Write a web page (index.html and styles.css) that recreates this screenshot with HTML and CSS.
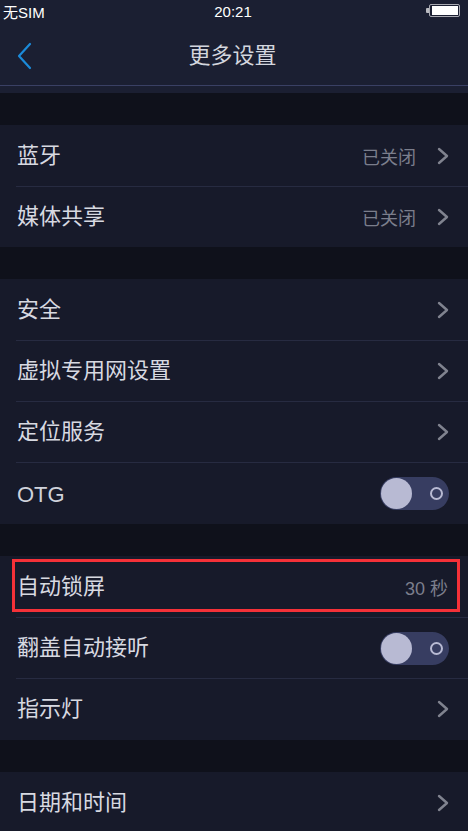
FILE: index.html
```html
<!DOCTYPE html>
<html lang="zh-CN">
<head>
<meta charset="utf-8">
<title>更多设置</title>
<link rel="stylesheet" href="styles.css">
</head>
<body>
<div class="page">
  <header class="top">
    <div class="status">
      <span class="carrier">无SIM</span>
      <span class="clock">20:21</span>
      <span class="battery"><span class="nub"></span><span class="cell"><span class="fill"></span></span></span>
    </div>
    <div class="nav">
      <svg class="back" width="16" height="28" viewBox="0 0 16 28"><path d="M14 2 L3 14 L14 26" fill="none" stroke="#1b8ad9" stroke-width="2.2" stroke-linecap="round" stroke-linejoin="round"/></svg>
      <h1 class="title">更多设置</h1>
    </div>
    <div class="navpad"></div>
  </header>

  <div class="gap"></div>
  <section class="group">
    <div class="row"><span class="label">蓝牙</span><span class="value">已关闭</span><svg class="chev" width="12" height="18" viewBox="0 0 12 18"><path d="M2 2 L10 9 L2 16" fill="none" stroke="#80838f" stroke-width="2.4" stroke-linecap="round" stroke-linejoin="round"/></svg></div>
    <div class="row"><span class="label">媒体共享</span><span class="value">已关闭</span><svg class="chev" width="12" height="18" viewBox="0 0 12 18"><path d="M2 2 L10 9 L2 16" fill="none" stroke="#80838f" stroke-width="2.4" stroke-linecap="round" stroke-linejoin="round"/></svg></div>
  </section>

  <div class="gap"></div>
  <section class="group">
    <div class="row"><span class="label">安全</span><svg class="chev" width="12" height="18" viewBox="0 0 12 18"><path d="M2 2 L10 9 L2 16" fill="none" stroke="#80838f" stroke-width="2.4" stroke-linecap="round" stroke-linejoin="round"/></svg></div>
    <div class="row"><span class="label">虚拟专用网设置</span><svg class="chev" width="12" height="18" viewBox="0 0 12 18"><path d="M2 2 L10 9 L2 16" fill="none" stroke="#80838f" stroke-width="2.4" stroke-linecap="round" stroke-linejoin="round"/></svg></div>
    <div class="row"><span class="label">定位服务</span><svg class="chev" width="12" height="18" viewBox="0 0 12 18"><path d="M2 2 L10 9 L2 16" fill="none" stroke="#80838f" stroke-width="2.4" stroke-linecap="round" stroke-linejoin="round"/></svg></div>
    <div class="row tall"><span class="label latin">OTG</span><span class="toggle"><span class="knob"></span><span class="ring"></span></span></div>
  </section>

  <div class="gap"></div>
  <section class="group">
    <div class="row marked"><span class="label">自动锁屏</span><span class="value last">30 秒</span><span class="highlight"></span></div>
    <div class="row"><span class="label">翻盖自动接听</span><span class="toggle"><span class="knob"></span><span class="ring"></span></span></div>
    <div class="row tall"><span class="label">指示灯</span><svg class="chev" width="12" height="18" viewBox="0 0 12 18"><path d="M2 2 L10 9 L2 16" fill="none" stroke="#80838f" stroke-width="2.4" stroke-linecap="round" stroke-linejoin="round"/></svg></div>
  </section>

  <div class="gap"></div>
  <section class="group">
    <div class="row"><span class="label">日期和时间</span><svg class="chev" width="12" height="18" viewBox="0 0 12 18"><path d="M2 2 L10 9 L2 16" fill="none" stroke="#80838f" stroke-width="2.4" stroke-linecap="round" stroke-linejoin="round"/></svg></div>
  </section>
</div>
</body>
</html>
```

FILE: styles.css
```css
html, body {
  margin: 0;
  padding: 0;
  background: #171a2a;
}
body {
  font-family: "Liberation Sans", "Noto Sans CJK SC", sans-serif;
  width: 468px;
  height: 831px;
  overflow: hidden;
}
.page {
  display: flex;
  flex-direction: column;
}
.top {
  background: #1b1f32;
  display: flex;
  flex-direction: column;
}
.status {
  height: 22px;
  display: flex;
  align-items: center;
  justify-content: space-between;
  padding: 0 8px 0 3px;
  position: relative;
  color: #ffffff;
  font-size: 15px;
}
.clock {
  position: absolute;
  left: 0;
  right: 0;
  text-align: center;
  margin-left: -2px;
}
.battery {
  display: flex;
  align-items: center;
  margin-top: -2px;
}
.nub {
  width: 3px;
  height: 5px;
  background: #b9bac0;
  border-radius: 1px 0 0 1px;
}
.cell {
  width: 31px;
  height: 13px;
  box-sizing: border-box;
  border: 1px solid #a9aab2;
  border-radius: 2px;
  padding: 1px 1px 1px 2px;
  display: flex;
}
.fill {
  flex: 1;
  background: #ffffff;
}
.nav {
  height: 62px;
  padding-bottom: 1px;
  display: flex;
  align-items: center;
  justify-content: center;
  position: relative;
  border-bottom: 1px solid #3a4064;
}
.back {
  position: absolute;
  left: 16px;
  top: 20px;
}
.title {
  margin: 0;
  font-family: "Noto Sans CJK SC", sans-serif;
  font-weight: 400;
  font-size: 22px;
  color: #d3d6de;
  margin-left: -3px;
}
.navpad {
  height: 7px;
}
.gap {
  height: 32px;
  background: #0f111b;
}
.group {
  display: flex;
  flex-direction: column;
}
.row {
  height: 61px;
  box-sizing: border-box;
  display: flex;
  align-items: center;
  padding: 0 19px 0 17px;
  position: relative;
}
.row.tall {
  height: 62px;
}
.row + .row::before {
  content: "";
  position: absolute;
  left: 16px;
  right: 0;
  top: 0;
  height: 1px;
  background: #272b41;
}
.label {
  flex: 1;
  font-size: 22px;
  color: #d7d9e1;
  line-height: 1;
}
.label.latin {
  color: #cfd2db;
  padding-top: 3px;
}
.value {
  font-size: 18px;
  color: #7b7e8c;
  margin-right: 21px;
  font-family: "Noto Sans CJK SC", sans-serif;
}
.value.last {
  margin-right: 1px;
  font-family: "Liberation Sans", "Noto Sans CJK SC", sans-serif;
}
.toggle {
  width: 69px;
  height: 33px;
  border-radius: 17px;
  background: #373d61;
  display: flex;
  align-items: center;
  justify-content: space-between;
  padding: 0 6px 0 1px;
  box-sizing: border-box;
  margin-top: 1px;
}
.knob {
  width: 31px;
  height: 31px;
  border-radius: 50%;
  background: #b8bad3;
}
.ring {
  width: 13px;
  height: 13px;
  box-sizing: border-box;
  border: 2px solid #b8bad3;
  border-radius: 50%;
}
.highlight {
  position: absolute;
  left: 12px;
  right: 8px;
  top: 3px;
  height: 53px;
  box-sizing: border-box;
  border: 3px solid #f53138;
}
```
